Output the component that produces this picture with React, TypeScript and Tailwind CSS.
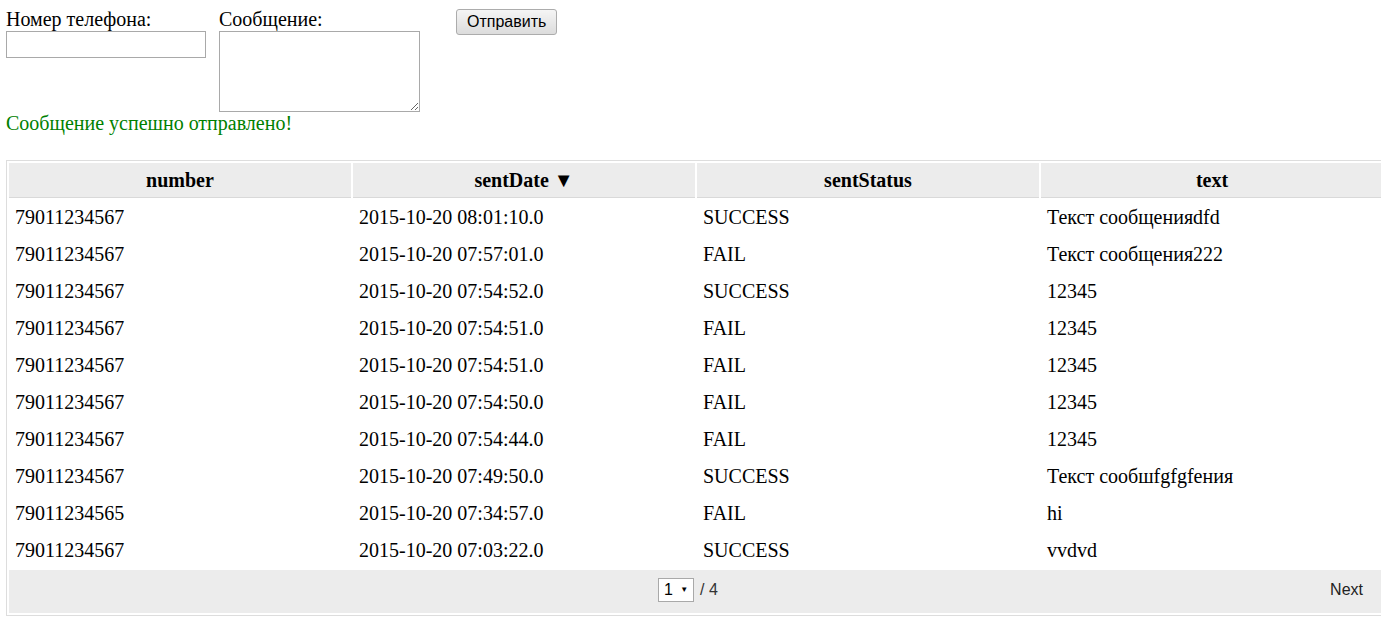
const rows = [
  ["79011234567", "2015-10-20 08:01:10.0", "SUCCESS", "Текст сообщенияdfd"],
  ["79011234567", "2015-10-20 07:57:01.0", "FAIL", "Текст сообщения222"],
  ["79011234567", "2015-10-20 07:54:52.0", "SUCCESS", "12345"],
  ["79011234567", "2015-10-20 07:54:51.0", "FAIL", "12345"],
  ["79011234567", "2015-10-20 07:54:51.0", "FAIL", "12345"],
  ["79011234567", "2015-10-20 07:54:50.0", "FAIL", "12345"],
  ["79011234567", "2015-10-20 07:54:44.0", "FAIL", "12345"],
  ["79011234567", "2015-10-20 07:49:50.0", "SUCCESS", "Текст сообшfgfgfения"],
  ["79011234565", "2015-10-20 07:34:57.0", "FAIL", "hi"],
  ["79011234567", "2015-10-20 07:03:22.0", "SUCCESS", "vvdvd"],
];

const headers = ["number", "sentDate ▼", "sentStatus", "text"];

export default function App() {
  return (
    <div className="h-[620px] w-[1381px] overflow-hidden bg-white font-['Liberation_Serif',serif] text-[20px] leading-[23px] text-black">
      <form className="flex items-start pl-[6px] pt-[8px]">
        <label className="flex w-[200px] flex-col">
          <span>Номер телефона:</span>
          <input className="h-[27px] w-[200px] border border-[#a9a9a9] bg-white px-1 outline-none" />
        </label>
        <label className="ml-[13px] flex flex-col">
          <span>Сообщение:</span>
          <textarea className="h-[81px] w-[201px] resize border border-[#a9a9a9] bg-white outline-none" />
        </label>
        <button
          type="button"
          className="ml-[36px] mt-px h-[26px] rounded-[3px] border border-[#acacac] bg-gradient-to-b from-[#f5f5f5] to-[#dcdcdc] px-[10px] font-['Liberation_Sans',sans-serif] text-[16px] leading-[18px]"
        >
          Отправить
        </button>
      </form>

      <p className="pl-[6px] text-[#008000]">Сообщение успешно отправлено!</p>

      <div className="ml-[6px] mt-[25px] w-[1380px] border border-[#dddddd]">
        <table className="w-full table-fixed border-separate border-spacing-[2px]">
          <thead>
            <tr>
              {headers.map((h) => (
                <th
                  key={h}
                  className="h-[35px] border-b border-[#d9d9d9] bg-[#ececec] text-center font-bold"
                >
                  {h}
                </th>
              ))}
            </tr>
          </thead>
          <tbody>
            {rows.map((r, i) => (
              <tr key={i}>
                {r.map((c, j) => (
                  <td key={j} className="h-[35px] px-[6px] text-left">
                    {c}
                  </td>
                ))}
              </tr>
            ))}
          </tbody>
          <tfoot>
            <tr>
              <td colSpan={4} className="h-[43px] bg-[#ececec] pb-[4px]">
                <div className="relative flex items-center justify-center font-['Liberation_Sans',sans-serif] text-[16px]">
                  <span className="-ml-[16px] flex h-[24px] w-[36px] items-center justify-between border border-[#a9a9a9] bg-white pl-[5px] pr-[5px]">
                    <span>1</span>
                    <span className="text-[8px]">▼</span>
                  </span>
                  <span className="ml-[6px] text-[#333]">/ 4</span>
                  <span className="absolute right-[20px] text-[#222]">Next</span>
                </div>
              </td>
            </tr>
          </tfoot>
        </table>
      </div>
    </div>
  );
}
